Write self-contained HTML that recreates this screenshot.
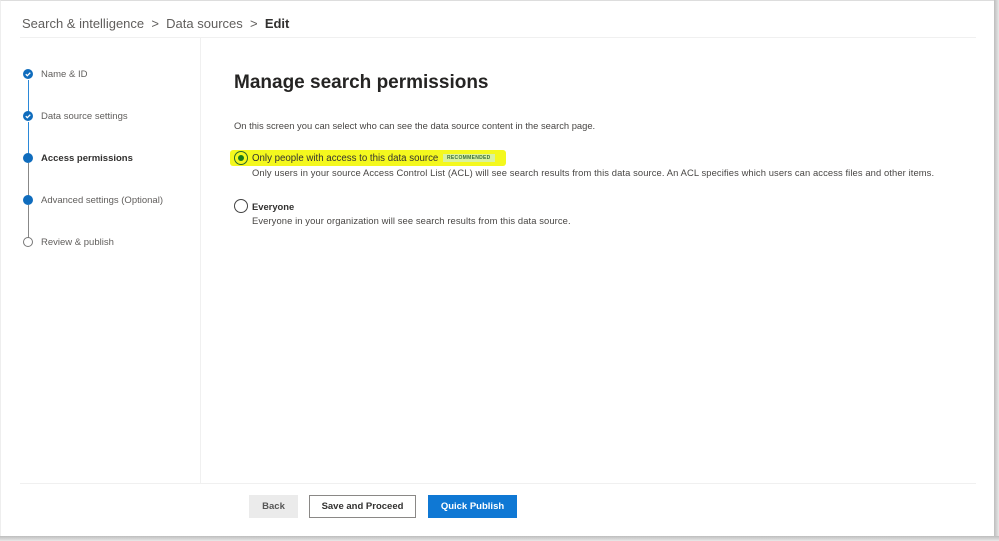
<!DOCTYPE html>
<html><head><meta charset="utf-8"><style>
*{margin:0;padding:0;box-sizing:border-box}
body{width:999px;height:541px;background:#fff;font-family:"Liberation Sans",sans-serif;position:relative;overflow:hidden;color:#323130}
.frame{position:absolute;left:0;top:0;width:994px;height:536px;border-top:1px solid #ddd;border-left:1px solid #eee}
.rsh{position:absolute;left:994px;top:0;width:5px;height:541px;background:linear-gradient(90deg,#bdbdbd,#e8e8e8)}
.bsh{position:absolute;left:0;top:536px;width:999px;height:5px;background:linear-gradient(#bdbdbd,#e8e8e8)}
.abs{position:absolute;white-space:nowrap}
.crumb{top:16px;left:22px;font-size:13px;color:#605e5c}
.crumb b{color:#323130;font-weight:bold}
.hl{position:absolute;height:1px;background:#f0f0f0}
.vl{position:absolute;left:200px;top:38px;width:1px;height:445px;background:#f0f0f0}
.step{font-size:9.5px;color:#605e5c;left:41px}
.dot{position:absolute;width:10px;height:10px;border-radius:50%;background:#0f6cbd;left:23px}
.line{position:absolute;left:27.5px;width:1px}
h1{position:absolute;left:234px;top:72px;font-size:19px;font-weight:bold;color:#252423}
.t{font-size:9.4px;color:#484644}
.btn{position:absolute;top:495px;height:23px;font-size:9.5px;font-weight:bold;display:flex;align-items:center;justify-content:center}
</style></head><body>
<div class="frame"></div>
<div class="abs crumb">Search &amp; intelligence &nbsp;&gt;&nbsp; Data sources &nbsp;&gt;&nbsp; <b>Edit</b></div>
<div class="hl" style="left:20px;top:37px;width:956px"></div>
<div class="vl"></div>

<div class="line" style="top:80px;height:36px;background:#2b88d8"></div>
<div class="line" style="top:122px;height:36px;background:#2b88d8"></div>
<div class="line" style="top:163px;height:36px;background:#888"></div>
<div class="line" style="top:205px;height:36px;background:#888"></div>
<div class="dot" style="top:69px"><svg width="10" height="10" viewBox="0 0 10 10" style="display:block"><path d="M2.8 5.2l1.5 1.5 3-3" stroke="#fff" stroke-width="1.3" fill="none"/></svg></div>
<div class="dot" style="top:111px"><svg width="10" height="10" viewBox="0 0 10 10" style="display:block"><path d="M2.8 5.2l1.5 1.5 3-3" stroke="#fff" stroke-width="1.3" fill="none"/></svg></div>
<div class="dot" style="top:153px"></div>
<div class="dot" style="top:195px"></div>
<div class="dot" style="top:237px;background:#fff;border:1px solid #777"></div>
<div class="abs step" style="top:69px">Name &amp; ID</div>
<div class="abs step" style="top:111px">Data source settings</div>
<div class="abs step" style="top:153px;color:#323130;font-weight:bold">Access permissions</div>
<div class="abs step" style="top:195px">Advanced settings (Optional)</div>
<div class="abs step" style="top:237px">Review &amp; publish</div>

<h1>Manage search permissions</h1>
<div class="abs t" style="left:234px;top:120px">On this screen you can select who can see the data source content in the search page.</div>

<div class="abs" style="left:230px;top:150px;width:276px;height:16px;background:#f4f81e;border-radius:3px"></div>
<div class="abs" style="left:234px;top:151px;width:14px;height:14px;border-radius:50%;border:1.5px solid #2b6a2b;background:#f4f81e"><div style="margin:2.5px;width:6px;height:6px;border-radius:50%;background:#1a7a1a"></div></div>
<div class="abs t" style="left:252px;top:153px;color:#323130;font-size:9.7px">Only people with access to this data source</div>
<div class="abs" style="left:443px;top:154px;font-size:5px;font-weight:bold;color:#3b6e3b;background:#d9f2a0;padding:1px 4px;letter-spacing:.3px">RECOMMENDED</div>
<div class="abs t" style="left:252px;top:167px;letter-spacing:.1px">Only users in your source Access Control List (ACL) will see search results from this data source. An ACL specifies which users can access files and other items.</div>

<div class="abs" style="left:234px;top:199px;width:14px;height:14px;border-radius:50%;border:1.3px solid #444"></div>
<div class="abs t" style="left:252px;top:201px;font-weight:bold;color:#323130">Everyone</div>
<div class="abs t" style="left:252px;top:215px;letter-spacing:.1px">Everyone in your organization will see search results from this data source.</div>

<div class="hl" style="left:20px;top:483px;width:956px"></div>
<div class="btn" style="left:249px;width:49px;background:#ebebeb;color:#555">Back</div>
<div class="btn" style="left:309px;width:107px;border:1px solid #8a8886;color:#323130">Save and Proceed</div>
<div class="btn" style="left:428px;width:89px;background:#0f78d4;color:#fff">Quick Publish</div>

<div class="rsh"></div><div class="bsh"></div>
</body></html>
